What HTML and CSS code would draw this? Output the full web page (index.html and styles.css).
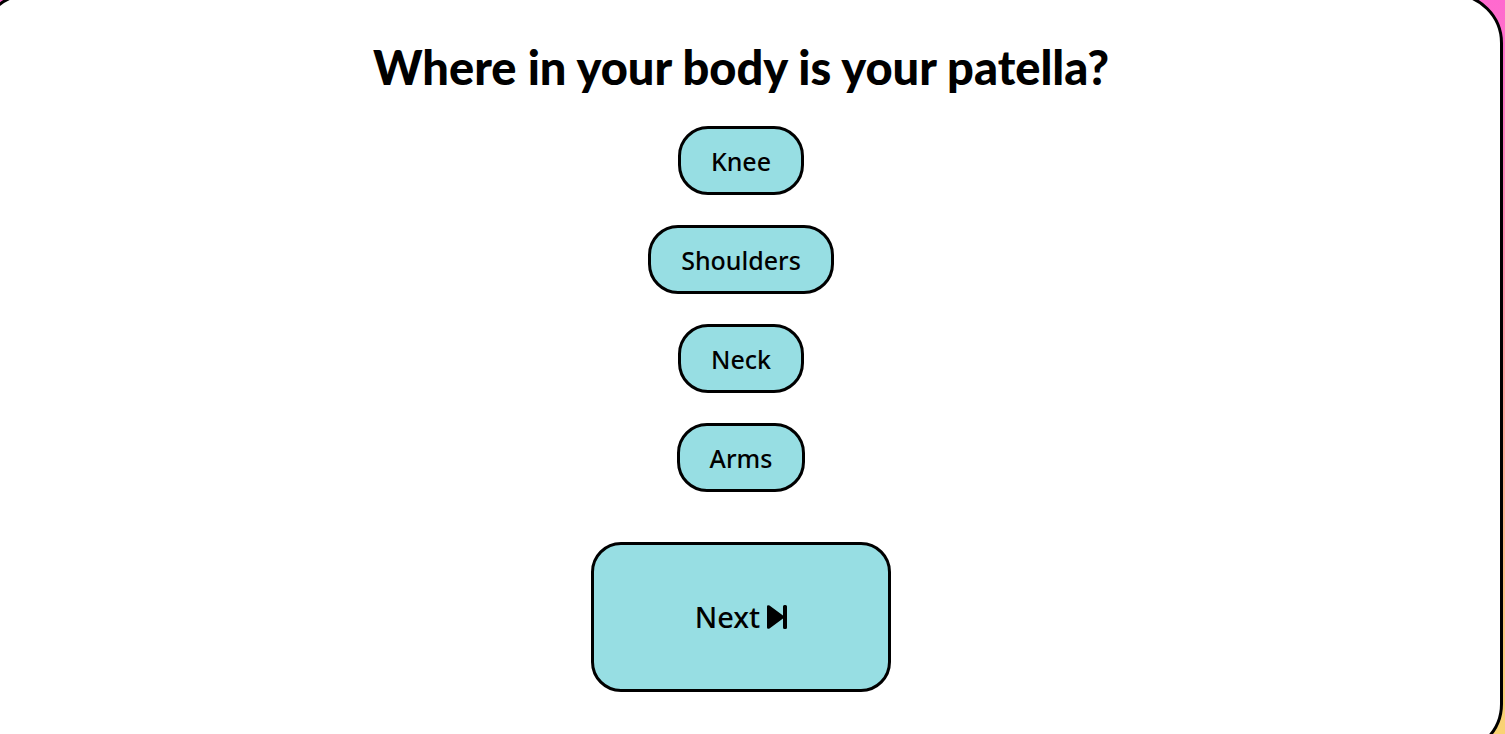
FILE: index.html
```html
<!DOCTYPE html>
<html lang="en">
<head>
<meta charset="utf-8">
<title>Body quiz</title>
<link rel="stylesheet" href="styles.css">
</head>
<body>
<main class="quiz">
  <h1 class="question">Where in your body is your patella?</h1>
  <div class="answers">
    <button class="btn" type="button">Knee</button>
    <button class="btn" type="button">Shoulders</button>
    <button class="btn" type="button">Neck</button>
    <button class="btn" type="button">Arms</button>
  </div>
  <button class="btn next" type="button">Next
    <svg class="next-icon" viewBox="0 0 20 24" aria-hidden="true"><path d="M0 1.500Q0-.5 2.500 .5L16 10.500V1.500Q16 0 17.500 0H18.500Q20 0 20 1.500V22.500Q20 24 18.500 24H17.500Q16 24 16 22.500V13.500L2.500 23.500Q0 24.500 0 22.500Z"/></svg>
  </button>
</main>
</body>
</html>
```
FILE: styles.css
```css
* {
  box-sizing: border-box;
}

body {
  margin: 0;
  min-height: 100vh;
  overflow: hidden;
  background: linear-gradient(#ff69cf, #f9d670);
  font-family: "Noto Sans", sans-serif;
  color: #000;
}

.quiz {
  display: flex;
  flex-direction: column;
  align-items: center;
  margin: -7px 2px 0 -21px;
  padding: 36px 30px 59px;
  border: 3px solid #000;
  border-radius: 50px;
  background: #fff;
}

.question {
  margin: 0 0 24px;
  font-family: Lato, sans-serif;
  font-size: 47px;
  line-height: 70px;
  font-weight: 900;
  text-align: center;
}

.answers {
  display: flex;
  flex-direction: column;
  align-items: center;
  gap: 30px;
  margin-bottom: 50px;
}

.btn {
  min-height: 69px;
  padding: 0 30px;
  border: 3px solid #000;
  border-radius: 30px;
  background: #97dee3;
  color: #000;
  font: 500 25px/32px "Noto Sans", sans-serif;
  cursor: pointer;
}

.next {
  display: flex;
  align-items: center;
  justify-content: center;
  gap: 7px;
  width: 300px;
  min-height: 150px;
  font-size: 29px;
}

.next-icon {
  width: 20px;
  height: 24px;
}
```
